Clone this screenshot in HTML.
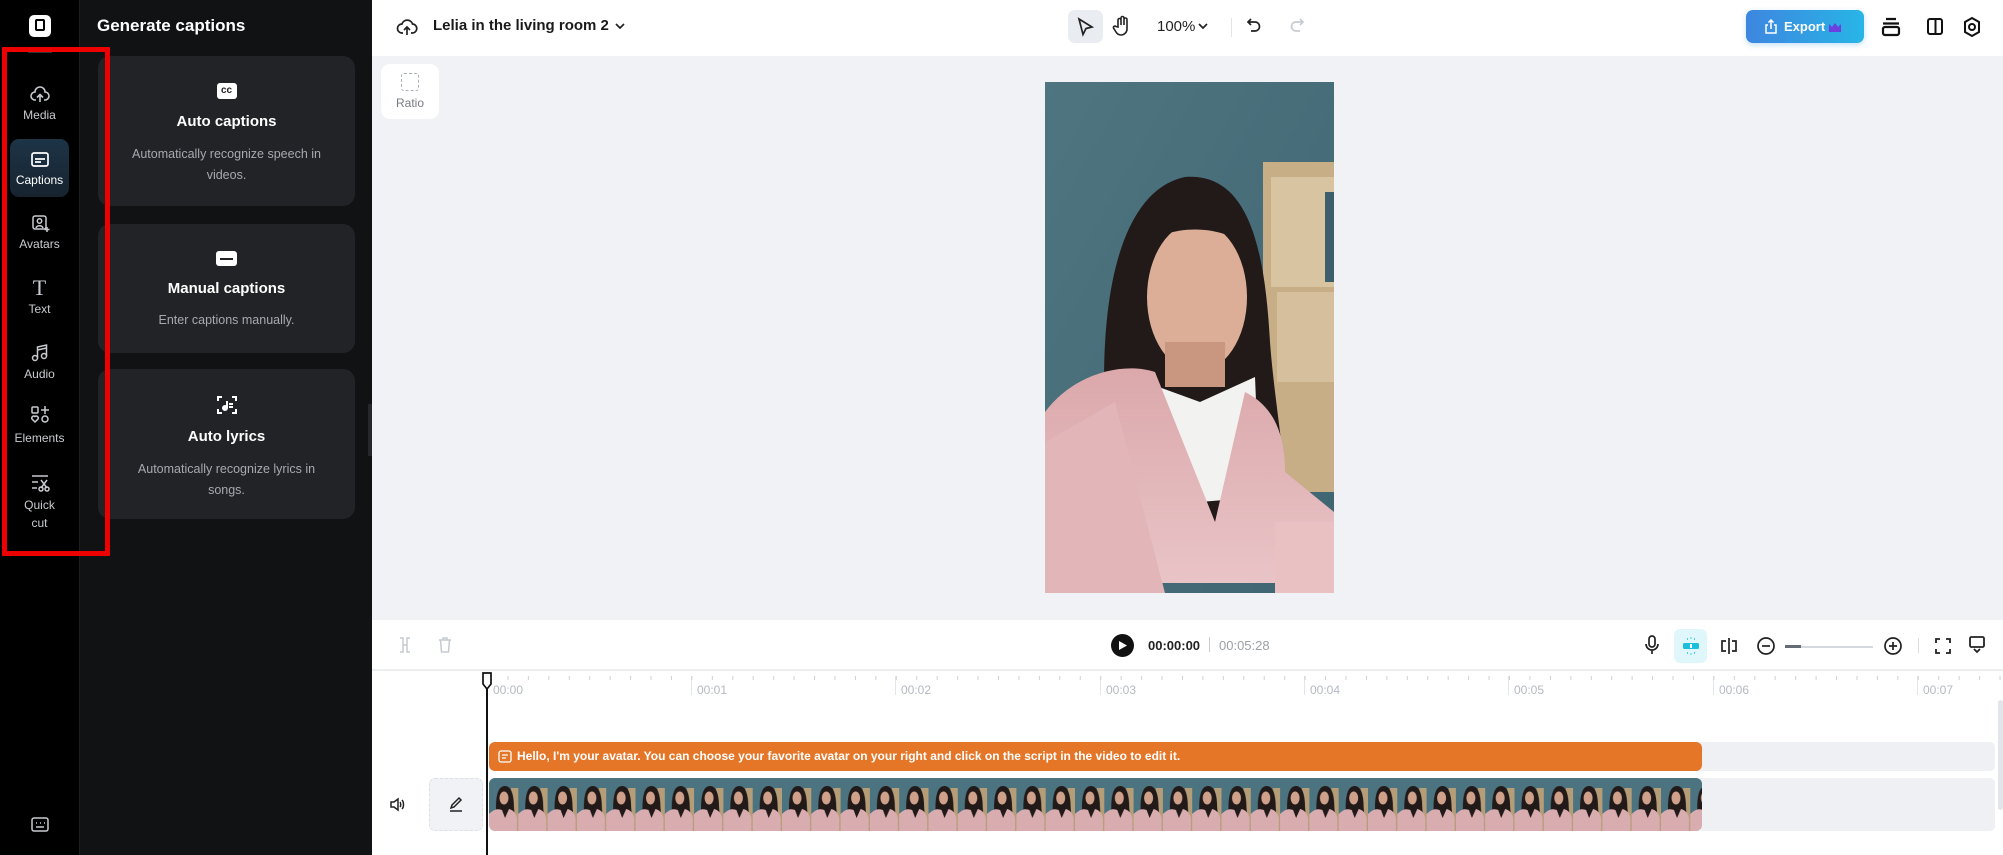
<!DOCTYPE html>
<html><head><meta charset="utf-8">
<style>
*{box-sizing:border-box;margin:0;padding:0}
body{width:2003px;height:855px;overflow:hidden;position:relative;background:#fff;font-family:"Liberation Sans",sans-serif}
.a{position:absolute}
.rail{left:0;top:0;width:79px;height:855px;background:#000}
.panel{left:79px;top:0;width:293px;height:855px;background:#111214;border-left:1px solid #1c1d20}
.ri{position:absolute;left:0;width:79px;text-align:center;color:#c9cbd0;font-size:12px}
.card{position:absolute;left:98px;width:257px;background:#222327;border-radius:12px;text-align:center;color:#fff}
.card h3{font-size:15px;font-weight:bold;margin-top:0}
.card p{font-size:12.5px;color:#a6a9b0;line-height:21px}
.maj{position:absolute;top:676px;width:1px;height:19px;background:#e2e5ea}
.lab{position:absolute;top:683px;font-size:12px;color:#b4b9c2}
svg{display:block}
</style></head><body>

<!-- left rail -->
<div class="a rail"></div>
<div class="a" style="left:29px;top:15px;width:22px;height:22px;background:#fff;border-radius:5px"></div>
<div class="a" style="left:35px;top:19px;width:10px;height:12px;border:2px solid #000;border-radius:2px"></div>
<div class="a" style="left:28px;top:52px;width:24px;height:1px;background:#333"></div>

<svg class="a" style="left:30px;top:85px" width="20" height="20" viewBox="0 0 20 20" fill="none" stroke="#c9cbd0" stroke-width="1.6"><path d="M6 15H5a4 4 0 0 1 0-8 5 5 0 0 1 10 0 4 4 0 0 1 0 8h-1M10 17V10M7 12.5L10 9.5l3 3"/></svg>
<div class="ri" style="top:108px">Media</div>
<div class="a" style="left:10px;top:139px;width:59px;height:58px;background:linear-gradient(#1d3447,#17232f);border-radius:9px"></div>
<svg class="a" style="left:30px;top:151px" width="20" height="18" viewBox="0 0 20 18" fill="none" stroke="#fff" stroke-width="1.7"><rect x="2" y="2" width="16" height="13" rx="2"/><path d="M5 8h10M5 11h6"/></svg>
<div class="ri" style="top:173px;color:#fff">Captions</div>
<svg class="a" style="left:31px;top:214px" width="20" height="20" viewBox="0 0 20 20" fill="none" stroke="#c9cbd0" stroke-width="1.5"><rect x="2" y="2" width="13" height="13" rx="2"/><circle cx="8.5" cy="7" r="2.2"/><path d="M5 14c1-3 6-3 7 0M16 13v5M13.5 15.5h5"/></svg>
<div class="ri" style="top:237px">Avatars</div>
<div class="ri" style="top:275px;font-size:22px;font-family:'Liberation Serif',serif;color:#c9cbd0">T</div>
<div class="ri" style="top:302px">Text</div>
<svg class="a" style="left:30px;top:343px" width="20" height="20" viewBox="0 0 20 20" fill="none" stroke="#c9cbd0" stroke-width="1.5"><circle cx="5" cy="15" r="2.5"/><circle cx="14" cy="13" r="2.5"/><path d="M7.5 15V4l9-2v11M7.5 7l9-2"/></svg>
<div class="ri" style="top:367px">Audio</div>
<svg class="a" style="left:30px;top:405px" width="20" height="20" viewBox="0 0 20 20" fill="none" stroke="#c9cbd0" stroke-width="1.5"><rect x="2" y="2" width="6" height="6" rx="1"/><path d="M15 1v8M11 5h8"/><path d="M5 17l-3-3a2 2 0 0 1 3-2.5A2 2 0 0 1 8 14z"/><circle cx="15" cy="14" r="3"/></svg>
<div class="ri" style="top:431px">Elements</div>
<svg class="a" style="left:30px;top:474px" width="20" height="18" viewBox="0 0 20 18" fill="none" stroke="#c9cbd0" stroke-width="1.5"><path d="M2 2h16M2 8h6M2 14h5M11 6l6 8M17 6l-6 8"/><circle cx="11" cy="15" r="2"/><circle cx="17" cy="15" r="2"/></svg>
<div class="ri" style="top:496px;line-height:18px">Quick<br>cut</div>
<svg class="a" style="left:31px;top:817px" width="18" height="16" viewBox="0 0 18 16" fill="none" stroke="#c9cbd0" stroke-width="1.5"><rect x="1" y="1" width="16" height="13" rx="2"/><path d="M5 6h1M9 6h1M13 6h1M5 10h8"/></svg>

<!-- panel -->
<div class="a panel"></div>
<div class="a" style="left:97px;top:16px;color:#fff;font-size:17px;font-weight:bold">Generate captions</div>
<div class="card" style="top:56px;height:150px">
  <div style="width:20px;height:16px;background:#fff;border-radius:3px;margin:27px auto 0;color:#222;font-size:10px;font-weight:bold;line-height:16px">cc</div>
  <h3 style="margin-top:14px">Auto captions</h3>
  <p style="margin-top:14px">Automatically recognize speech in<br>videos.</p>
</div>
<div class="card" style="top:224px;height:129px">
  <div style="width:21px;height:15px;background:#fff;border-radius:3px;margin:27px auto 0;position:relative"><div style="position:absolute;left:4px;top:7px;width:13px;height:2px;background:#222"></div></div>
  <h3 style="margin-top:14px">Manual captions</h3>
  <p style="margin-top:13px">Enter captions manually.</p>
</div>
<div class="card" style="top:369px;height:150px">
  <svg style="margin:25px auto 0" width="22" height="22" viewBox="0 0 22 22" fill="none" stroke="#fff" stroke-width="2"><path d="M2 7V3h4M16 3h4v4M20 15v4h-4M6 19H2v-4"/><circle cx="9" cy="14" r="2" fill="#fff"/><path d="M11 14V7M13 10h4M13 13h4"/></svg>
  <h3 style="margin-top:12px">Auto lyrics</h3>
  <p style="margin-top:14px">Automatically recognize lyrics in<br>songs.</p>
</div>
<div class="a" style="left:368px;top:404px;width:11px;height:52px;background:#26272b;border-radius:0 6px 6px 0"></div>

<!-- red box -->
<div class="a" style="left:2px;top:47px;width:108px;height:509px;border:5px solid #ee0000;z-index:5"></div>

<!-- top bar -->
<div class="a" style="left:372px;top:0;width:1631px;height:56px;background:#fff"></div>
<svg class="a" style="left:396px;top:17px" width="22" height="20" viewBox="0 0 22 20" fill="none" stroke="#222" stroke-width="1.7"><path d="M7 16H6a4.5 4.5 0 0 1 0-9 5.5 5.5 0 0 1 10.5 0A4.5 4.5 0 0 1 16 16h-1M11 18v-8M8 13l3-3 3 3"/></svg>
<div class="a" style="left:433px;top:17px;font-size:15px;font-weight:bold;color:#1a1a1a">Lelia in the living room 2</div>
<svg class="a" style="left:614px;top:22px" width="12" height="8" viewBox="0 0 12 8" fill="none" stroke="#222" stroke-width="1.7"><path d="M2 2l4 4 4-4"/></svg>
<div class="a" style="left:1068px;top:10px;width:35px;height:33px;background:#e9ecf0;border-radius:7px"></div>
<svg class="a" style="left:1076px;top:17px" width="18" height="20" viewBox="0 0 18 20" fill="none" stroke="#222" stroke-width="1.7"><path d="M3 2l13 8-6 1.5-3 6z"/></svg>
<svg class="a" style="left:1112px;top:15px" width="20" height="22" viewBox="0 0 20 22" fill="none" stroke="#222" stroke-width="1.6"><path d="M6 12V5a1.5 1.5 0 0 1 3 0v5V3a1.5 1.5 0 0 1 3 0v7V4.5a1.5 1.5 0 0 1 3 0V14a6 6 0 0 1-6 6 6 6 0 0 1-5-3l-2.5-4a1.5 1.5 0 0 1 2.5-1.5z"/></svg>
<div class="a" style="left:1157px;top:18px;font-size:15px;color:#222">100%</div>
<svg class="a" style="left:1197px;top:22px" width="12" height="8" viewBox="0 0 12 8" fill="none" stroke="#222" stroke-width="1.7"><path d="M2 2l4 4 4-4"/></svg>
<div class="a" style="left:1231px;top:18px;width:1px;height:19px;background:#e2e4e8"></div>
<svg class="a" style="left:1246px;top:16px" width="16" height="20" viewBox="0 0 16 20" fill="none" stroke="#222" stroke-width="1.7"><path d="M5 3L2 6l3 3M2 6h7a4.5 4.5 0 0 1 0 9H5"/></svg>
<svg class="a" style="left:1289px;top:16px" width="16" height="20" viewBox="0 0 16 20" fill="none" stroke="#c7ccd3" stroke-width="1.7"><path d="M11 3l3 3-3 3M14 6H7a4.5 4.5 0 0 0 0 9h4"/></svg>
<div class="a" style="left:1746px;top:10px;width:118px;height:33px;border-radius:7px;background:linear-gradient(90deg,#3d86e0,#28b5e6);box-shadow:0 2px 6px rgba(60,150,230,.3)"></div>
<svg class="a" style="left:1764px;top:19px" width="14" height="15" viewBox="0 0 14 15" fill="none" stroke="#fff" stroke-width="1.5"><path d="M4 6H2v8h10V6h-2M7 10V1M4.5 3.5L7 1l2.5 2.5"/></svg>
<div class="a" style="left:1784px;top:19px;color:#fff;font-size:13px;font-weight:bold">Export</div>
<svg class="a" style="left:1828px;top:22px" width="14" height="10" viewBox="0 0 14 10"><path d="M1 2l3 3 3-4 3 4 3-3v8H1z" fill="#6b3fe0"/></svg>
<svg class="a" style="left:1880px;top:16px" width="22" height="22" viewBox="0 0 22 22" fill="none" stroke="#111" stroke-width="2.2"><path d="M6 3h10M3 7.5h16"/><rect x="3" y="11" width="16" height="8" rx="2"/></svg>
<svg class="a" style="left:1926px;top:17px" width="18" height="19" viewBox="0 0 18 19" fill="none" stroke="#111" stroke-width="2"><rect x="2" y="2" width="14" height="15" rx="2"/><path d="M9.5 2v15"/></svg>
<svg class="a" style="left:1962px;top:16px" width="20" height="22" viewBox="0 0 20 22" fill="none" stroke="#111" stroke-width="2"><path d="M10 2l7 4v10l-7 4-7-4V6z"/><circle cx="10" cy="11" r="3"/></svg>

<!-- canvas -->
<div class="a" style="left:372px;top:56px;width:1631px;height:564px;background:#f0f2f5"></div>
<div class="a" style="left:381px;top:64px;width:58px;height:55px;background:#fff;border-radius:9px"></div>
<div class="a" style="left:401px;top:73px;width:18px;height:18px;border:1.5px dashed #aab0b8;border-radius:3px"></div>
<div class="a" style="left:381px;top:96px;width:58px;text-align:center;font-size:12px;color:#777c85">Ratio</div>

<!-- video -->
<svg class="a" style="left:1045px;top:82px" width="289" height="511" viewBox="0 0 289 511">
<defs><linearGradient id="bg" x1="0" y1="0" x2="1" y2="1"><stop offset="0" stop-color="#4f7580"/><stop offset="1" stop-color="#3f6573"/></linearGradient>
<linearGradient id="pk" x1="0" y1="0" x2="0" y2="1"><stop offset="0" stop-color="#dba8ab"/><stop offset="1" stop-color="#e9c4c7"/></linearGradient></defs>
<rect width="289" height="511" fill="url(#bg)"/>
<rect x="218" y="80" width="71" height="330" fill="#c8ae86"/>
<rect x="226" y="95" width="63" height="110" fill="#d8c4a0"/>
<rect x="232" y="210" width="57" height="90" fill="#d5bf9c"/>
<rect x="280" y="110" width="9" height="90" fill="#3d5f6c"/>
<path d="M60 330C55 230 70 110 140 95 205 90 220 170 225 260 230 330 250 430 240 470L70 470z" fill="#221a19"/>
<ellipse cx="152" cy="215" rx="50" ry="75" fill="#dcae98"/>
<path d="M95 170c20-60 90-60 110 0-20-30-90-30-110 0z" fill="#221a19"/>
<path d="M120 260h60v45h-60z" fill="#c9977f"/>
<path d="M100 300l55 20 55-25 5 120-120 10z" fill="#f2f2f1"/>
<path d="M0 330C30 290 80 280 110 290l60 150 30-130c20 10 40 30 40 80l49 40v71H0z" fill="url(#pk)"/>
<path d="M0 360l70-40 50 191H0z" fill="#e2b5b8"/>
<rect x="230" y="440" width="59" height="71" fill="#e9c1c3"/>
</svg>

<!-- playback bar -->
<div class="a" style="left:372px;top:620px;width:1631px;height:51px;background:#fff;border-bottom:2px solid #eceef1"></div>
<svg class="a" style="left:398px;top:636px" width="14" height="18" viewBox="0 0 14 18" fill="none" stroke="#c5cad1" stroke-width="1.5"><path d="M2 2h3v14H2M12 2H9v14h3M5 9h4"/></svg>
<svg class="a" style="left:437px;top:636px" width="16" height="18" viewBox="0 0 16 18" fill="none" stroke="#c5cad1" stroke-width="1.5"><path d="M2 4h12M6 4V2h4v2M3.5 4l1 12h7l1-12"/></svg>
<div class="a" style="left:1111px;top:634px;width:23px;height:23px;background:#111;border-radius:50%"></div>
<svg class="a" style="left:1118px;top:640px" width="10" height="11" viewBox="0 0 10 11"><path d="M1 1l8 4.5L1 10z" fill="#fff"/></svg>
<div class="a" style="left:1148px;top:638px;font-size:13px;font-weight:bold;color:#222">00:00:00</div>
<div class="a" style="left:1209px;top:637px;width:1px;height:15px;background:#ccc"></div>
<div class="a" style="left:1219px;top:638px;font-size:13px;color:#9aa0a8">00:05:28</div>
<svg class="a" style="left:1644px;top:634px" width="16" height="22" viewBox="0 0 16 22" fill="none" stroke="#222" stroke-width="1.7"><rect x="5" y="2" width="6" height="11" rx="3"/><path d="M2 10a6 6 0 0 0 12 0M8 16v4"/></svg>
<div class="a" style="left:1674px;top:629px;width:33px;height:34px;background:#dff6fb;border-radius:6px"></div>
<svg class="a" style="left:1680px;top:636px" width="22" height="20" viewBox="0 0 22 20"><rect x="3" y="7" width="16" height="6" rx="1.5" fill="#1bbfdd"/><rect x="10" y="8" width="2" height="4" fill="#fff"/><path d="M7 3h1M10.5 2h1M14 3h1M7 17h1M10.5 18h1M14 17h1" stroke="#1bbfdd" stroke-width="1.5"/></svg>
<svg class="a" style="left:1719px;top:636px" width="20" height="20" viewBox="0 0 20 20" fill="none" stroke="#222" stroke-width="1.7"><path d="M10 2v16M7 5H3v10h4M13 5h4v10h-4"/></svg>
<svg class="a" style="left:1756px;top:636px" width="20" height="20" viewBox="0 0 20 20" fill="none" stroke="#222" stroke-width="1.7"><circle cx="10" cy="10" r="8"/><path d="M6 10h8"/></svg>
<div class="a" style="left:1785px;top:646px;width:88px;height:2px;background:#d5d9df"></div>
<div class="a" style="left:1785px;top:645px;width:16px;height:3px;background:#666c75"></div>
<svg class="a" style="left:1883px;top:636px" width="20" height="20" viewBox="0 0 20 20" fill="none" stroke="#222" stroke-width="1.7"><circle cx="10" cy="10" r="8"/><path d="M6 10h8M10 6v8"/></svg>
<div class="a" style="left:1918px;top:638px;width:1px;height:15px;background:#ddd"></div>
<svg class="a" style="left:1934px;top:637px" width="18" height="18" viewBox="0 0 18 18" fill="none" stroke="#222" stroke-width="1.8"><path d="M2 6V2h4M12 2h4v4M16 12v4h-4M6 16H2v-4"/></svg>
<svg class="a" style="left:1968px;top:635px" width="18" height="20" viewBox="0 0 18 20" fill="none" stroke="#222" stroke-width="1.8"><rect x="2" y="2" width="14" height="10" rx="1.5"/><path d="M6 14l3 3 3-3"/></svg>

<!-- ruler -->
<div class="maj" style="left:691px"></div><div class="maj" style="left:895px"></div><div class="maj" style="left:1100px"></div><div class="maj" style="left:1304px"></div><div class="maj" style="left:1508px"></div><div class="maj" style="left:1713px"></div><div class="maj" style="left:1917px"></div>
<div class="lab" style="left:493px">00:00</div><div class="lab" style="left:697px">00:01</div><div class="lab" style="left:901px">00:02</div><div class="lab" style="left:1106px">00:03</div><div class="lab" style="left:1310px">00:04</div><div class="lab" style="left:1514px">00:05</div><div class="lab" style="left:1719px">00:06</div><div class="lab" style="left:1923px">00:07</div>
<svg class="a" style="left:487px;top:676px" width="1516" height="5"><defs><pattern id="tk" width="20.44" height="5" patternUnits="userSpaceOnUse"><rect x="0" y="0" width="1" height="4" fill="#cdd1d8"/></pattern></defs><rect width="1516" height="5" fill="url(#tk)"/></svg>
<div class="a" style="left:1998px;top:700px;width:5px;height:110px;background:#e2e5ea;border-radius:3px"></div>

<!-- tracks -->
<div class="a" style="left:489px;top:742px;width:1506px;height:29px;background:#eef0f3;border-radius:5px"></div>
<div class="a" style="left:489px;top:742px;width:1213px;height:29px;background:#e67627;border-radius:6px"></div>
<svg class="a" style="left:498px;top:750px" width="14" height="13" viewBox="0 0 14 13" fill="none" stroke="#fff" stroke-width="1.3"><rect x="1" y="1" width="12" height="11" rx="2"/><path d="M4 5h6M4 8h4"/></svg>
<div class="a" style="left:517px;top:749px;color:#fff;font-size:12px;font-weight:bold">Hello, I'm your avatar. You can choose your favorite avatar on your right and click on the script in the video to edit it.</div>
<div class="a" style="left:489px;top:778px;width:1506px;height:53px;background:#eef0f3;border-radius:5px"></div>
<svg class="a" style="left:489px;top:778px" width="1213" height="53">
<defs><clipPath id="cp"><rect width="1213" height="53" rx="6"/></clipPath>
<pattern id="th" width="29.3" height="53" patternUnits="userSpaceOnUse">
<rect width="29.3" height="53" fill="#4b7380"/><rect x="22" y="10" width="7.3" height="43" fill="#b59d78"/>
<path d="M7 30c0-15 3-22 9-22s9 8 9 22l2 23H5z" fill="#221a19"/><ellipse cx="15" cy="20" rx="4.5" ry="6.5" fill="#cfa18b"/>
<path d="M0 36c6-6 10-5 13-4l3 8 4-9c4 1 7 4 8 9v13H0z" fill="#d9adb0"/></pattern></defs>
<g clip-path="url(#cp)"><rect width="1213" height="53" fill="url(#th)"/></g></svg>
<svg class="a" style="left:389px;top:797px" width="16" height="15" viewBox="0 0 16 15" fill="none" stroke="#222" stroke-width="1.5"><path d="M2 5h3l4-3v11l-4-3H2zM11 5c1 1 1 4 0 5M13 3c2 2 2 7 0 9"/></svg>
<div class="a" style="left:429px;top:778px;width:54px;height:53px;background:#f0f2f5;border:1px dashed #dde0e5;border-radius:6px"></div>
<svg class="a" style="left:448px;top:796px" width="16" height="16" viewBox="0 0 16 16" fill="none" stroke="#222" stroke-width="1.5"><path d="M3 12l1-3 7-7 2 2-7 7zM2 15h12"/></svg>

<!-- playhead -->
<div class="a" style="left:486px;top:688px;width:2px;height:167px;background:#111"></div>
<svg class="a" style="left:481px;top:672px" width="12" height="19" viewBox="0 0 12 19"><path d="M2 1h8v11l-4 5-4-5z" fill="#fff" stroke="#111" stroke-width="1.7"/></svg>
</body></html>
